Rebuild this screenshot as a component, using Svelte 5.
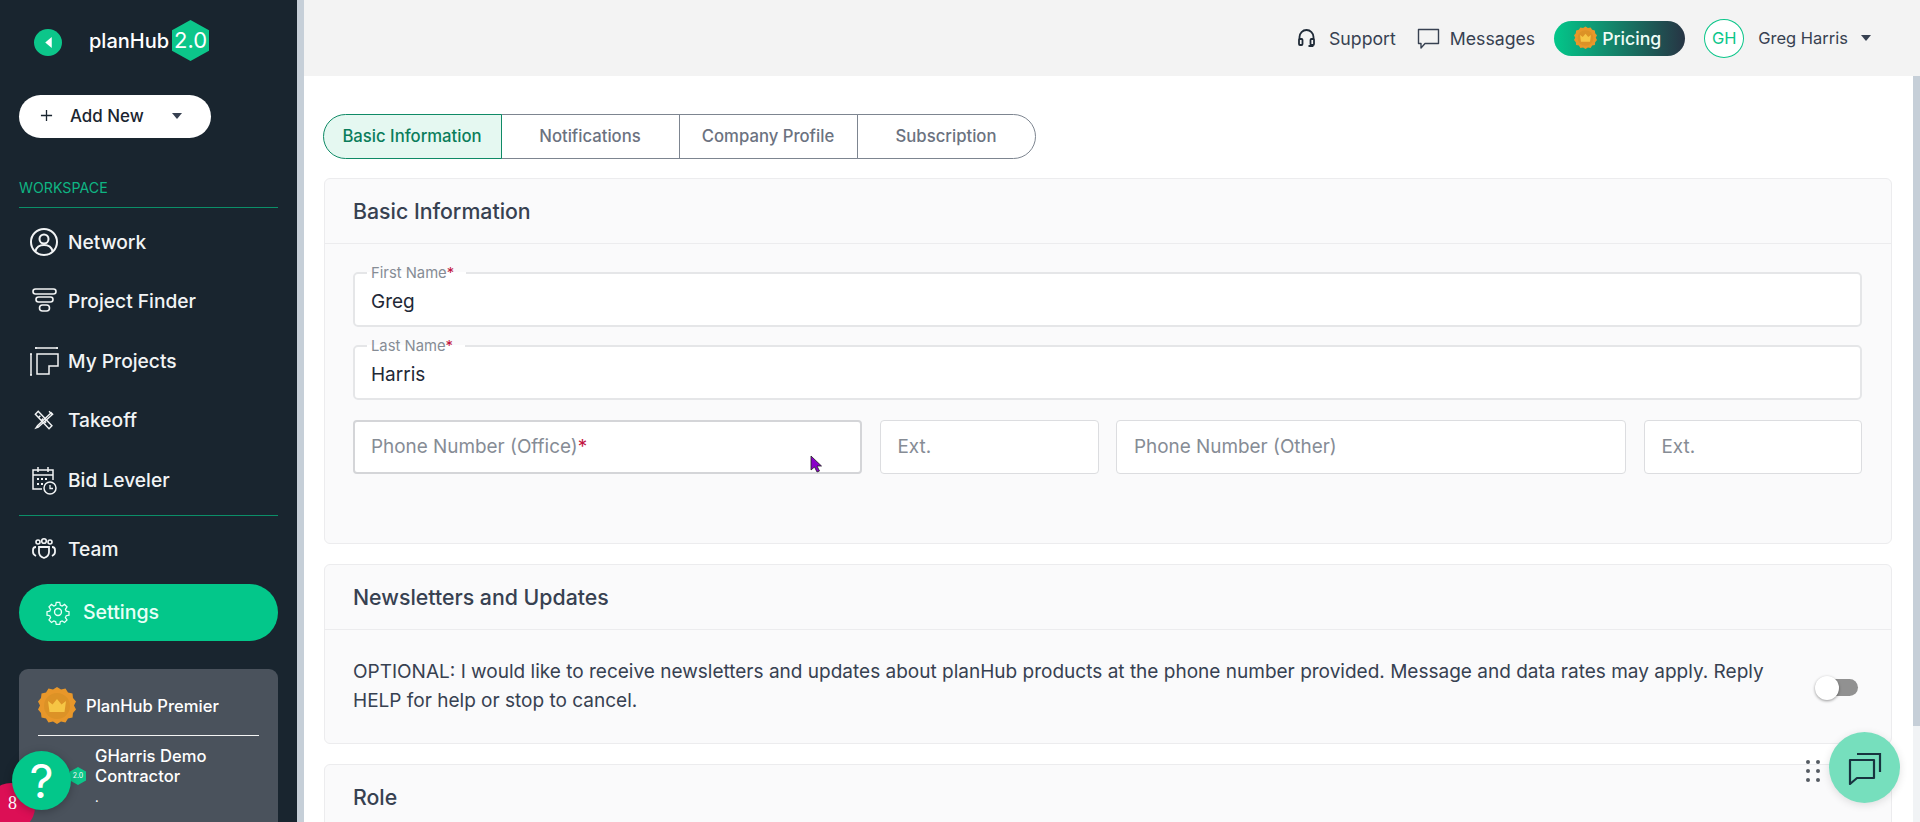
<script>
	const tabs = ['Basic Information', 'Notifications', 'Company Profile', 'Subscription'];
	const navTop = [
		{ label: 'Network', icon: 'network' },
		{ label: 'Project Finder', icon: 'finder' },
		{ label: 'My Projects', icon: 'projects' },
		{ label: 'Takeoff', icon: 'takeoff' },
		{ label: 'Bid Leveler', icon: 'bid' }
	];
</script>

{#snippet hex(cls, text)}
	<span class={cls}>
		<svg viewBox="0 0 37 41" preserveAspectRatio="none"><path d="M18.5 0 37 10.2v20.6L18.5 41 0 30.8V10.2z" fill="#0cc68a" /></svg>
		<b>{text}</b>
	</span>
{/snippet}

{#snippet badge(cls)}
	<svg class={cls} viewBox="0 0 38 38">
		<path fill="#e8972a" d="M19 0l4 2.500 4.500-1 2.500 4 4.500 1 .5 4.500 3 3.500-2 4 2 4-3 3.500-.5 4.500-4.500 1-2.500 4-4.500-1-4 2.500-4-2.500-4.500 1-2.500-4-4.500-1-.5-4.500-3-3.500 2-4-2-4 3-3.500.5-4.500 4.500-1 2.500-4 4.500 1z" />
		<circle cx="19" cy="19" r="13" fill="#dc9226" />
		<path fill="#f6c544" d="M10 14l4.500 3.500L19 12l4.500 5.500L28 14l-1.500 11h-15z" />
	</svg>
{/snippet}

{#snippet navIcon(name)}
	<svg class="nav-icon" viewBox="0 0 30 30" fill="none" stroke="currentColor" stroke-width="1.6">
		{#if name === 'network'}
			<circle cx="15" cy="15" r="13" stroke-width="2" /><circle cx="15" cy="12" r="4.500" stroke-width="2" /><path d="M6.500 24c1-4 4-6 8.500-6s7.500 2 8.500 6" stroke-width="2" />
		{:else if name === 'finder'}
			<rect x="4" y="3" width="23" height="5" rx="2.500" /><rect x="7" y="11" width="17" height="5" rx="2.500" /><rect x="10.500" y="19" width="10" height="6" rx="3" />
		{:else if name === 'projects'}
			<path d="M8 8h21v12h-9v8H8zM6 2h23M7 1v2M28 1v2M2 8v21M1 8h2M1 29h2" stroke-width="1.500" />
		{:else if name === 'takeoff'}
			<g transform="translate(15 15) scale(.72) translate(-15 -15)" stroke-width="2">
				<path d="M7 3 3 7l19 20 4-4zM10 9l-2 2M14 13l-2 2M18 17l-2 2" /><path d="M25 5 6 23l-2 3 3-1L27 7zM22 3l5 5" />
			</g>
		{:else if name === 'bid'}
			<path d="M13 24H4V5h20v10M4 10h20M9 2v5M19 2v5" stroke-width="1.500" /><path d="M8 13h2v2H8zM12 13h2v2h-2zM16 13h2v2h-2zM8 18h2v2H8zM12 18h2v2h-2z" fill="currentColor" stroke="none" /><circle cx="21" cy="23" r="6" stroke-width="1.500" /><path d="M21 20v3.500h3" stroke-width="1.300" />
		{:else if name === 'team'}
			<circle cx="9" cy="8" r="2" /><circle cx="15" cy="7" r="2.300" /><circle cx="21" cy="8" r="2" /><path d="M10 13h10v5c0 3-2 5-5 6-3-1-5-3-5-6z" stroke-width="1.800" /><path d="M7 13c-2 0-3 1-3 3v2c0 2 1 3 3 4M23 13c2 0 3 1 3 3v2c0 2-1 3-3 4" stroke-width="1.800" />
		{:else}
			<circle cx="15" cy="15" r="4" /><path d="M12.800 3h4.400l.7 3.500 2.300 1 3-2 3.100 3.100-2 3 1 2.300 3.500.7v4.400l-3.500.7-1 2.300 2 3-3.100 3.100-3-2-2.300 1-.7 3.500h-4.400l-.7-3.500-2.300-1-3 2-3.100-3.100 2-3-1-2.300-3.500-.7v-4.400l3.500-.7 1-2.300-2-3 3.100-3.100 3 2 2.300-1z" transform="translate(15 15) scale(.92) translate(-15 -15)" />
		{/if}
	</svg>
{/snippet}

{#snippet field(label, value)}
	<fieldset class="field">
		<legend>{label}<i>*</i></legend>
		<span>{value}</span>
	</fieldset>
{/snippet}

<div class="page">
	<aside class="sidebar">
		<div class="logo-row">
			<span class="back"><svg viewBox="0 0 10 12"><path d="M8 1v10L2 6z" fill="#fff" /></svg></span>
			<span class="logo-word">planHub</span>
			{@render hex('hex-big', '2.0')}
		</div>

		<button class="add-new">
			<svg viewBox="0 0 14 14"><path d="M7 1v12M1 7h12" stroke="#1a2530" stroke-width="1.400" /></svg>
			<span>Add New</span>
			<i class="caret"></i>
		</button>

		<div class="section-label">WORKSPACE</div>

		<nav class="nav">
			{#each navTop as item}
				<a class="nav-item" href="#top">{@render navIcon(item.icon)}{item.label}</a>
			{/each}
		</nav>

		<div class="team">
			<a class="nav-item" href="#top">{@render navIcon('team')}Team</a>
			<a class="settings" href="#top">{@render navIcon('settings')}Settings</a>
		</div>

		<div class="plan-card">
			<div class="plan-head">
				{@render badge('plan-badge')}
				<span>PlanHub Premier</span>
			</div>
			<div class="plan-company">
				{@render hex('hex-small', '2.0')}
				<div>
					<div>GHarris Demo<br />Contractor</div>
					<small>.</small>
				</div>
			</div>
		</div>
	</aside>

	<div class="side-scroll"></div>

	<div class="main">
		<header class="topbar">
			<a href="#top" class="top-link">
				<svg viewBox="0 0 17 18" width="17" height="18" fill="none" stroke="#1f2a37" stroke-width="1.800"><path d="M1.500 11V8a7 7 0 0 1 14 0v3" /><rect x="1" y="10" width="3.500" height="6" rx="1" /><rect x="12.500" y="10" width="3.500" height="6" rx="1" /><path d="M14.500 16v1h-4" /></svg>
				Support
			</a>
			<a href="#top" class="top-link msg">
				<svg viewBox="0 0 23 21" width="23" height="21" fill="none" stroke="#374151" stroke-width="1.400"><path d="M1.500 1.500h20v14H8L4 20v-4.500H1.500z" stroke-linejoin="round" /></svg>
				Messages
			</a>
			<a href="#top" class="pricing">{@render badge('pricing-badge')}Pricing</a>
			<span class="avatar">GH</span>
			<span class="user">Greg Harris</span>
			<i class="caret"></i>
		</header>

		<div class="content-wrap">
			<main class="content">
				<div class="tabs">
					{#each tabs as tab, i}
						<button class:active={i === 0}>{tab}</button>
					{/each}
				</div>

				<section class="card basic">
					<h2>Basic Information</h2>
					<div class="card-body">
						{@render field('First Name', 'Greg')}
						{@render field('Last Name', 'Harris')}
						<div class="phone-row">
							<div class="ph office">Phone Number (Office)<i>*</i></div>
							<div class="ph">Ext.</div>
							<div class="ph">Phone Number (Other)</div>
							<div class="ph">Ext.</div>
						</div>
					</div>
				</section>

				<section class="card news">
					<h2>Newsletters and Updates</h2>
					<div class="news-body">
						<p>OPTIONAL: I would like to receive newsletters and updates about planHub products at the phone number provided. Message and data rates may apply. Reply HELP for help or stop to cancel.</p>
						<span class="toggle"><b></b></span>
					</div>
				</section>

				<section class="card role">
					<h2>Role</h2>
				</section>
			</main>
			<div class="main-scroll"></div>
		</div>
	</div>

	<svg class="cursor" viewBox="0 0 12 18"><path d="M1 1v14l3.500-3 2.500 5 2.500-1-2.500-5h4.500z" fill="#8a00c9" stroke="#222" stroke-width=".8" /></svg>

	<div class="help">?</div>
	<div class="alert">8</div>

	<div class="dots">{#each Array(6) as _}<i></i>{/each}</div>
	<div class="chat">
		<svg viewBox="0 0 34 34" width="34" height="34" fill="none" stroke="#17333f" stroke-width="2.200"><path d="M2 9h24v18H9l-7 6z" stroke-linejoin="round" /><path d="M9 3h23v18" /></svg>
	</div>
</div>

<style>
	:global(body) {
		margin: 0;
		font-family: Inter, 'Liberation Sans', sans-serif;
	}

	.page {
		position: relative;
		display: flex;
		width: 1920px;
		height: 822px;
		overflow: hidden;
		background: #fff;
		color: #374151;
	}

	.sidebar {
		flex: 0 0 297px;
		box-sizing: border-box;
		padding: 0 19px;
		background: #19252f;
		color: #fff;
	}

	.side-scroll {
		flex: 0 0 7px;
		background: #c6cfd8;
	}

	.logo-row {
		display: flex;
		align-items: center;
		height: 82px;
		padding-left: 15px;
	}

	.back {
		display: flex;
		align-items: center;
		justify-content: center;
		width: 28px;
		height: 27px;
		margin-top: 3px;
		border-radius: 50%;
		background: #0cc68a;
	}

	.back svg {
		width: 11px;
		height: 13px;
	}

	.logo-word {
		margin-left: 27px;
		font-size: 20px;
		font-weight: 500;
		white-space: nowrap;
	}

	.hex-big,
	.hex-small {
		position: relative;
		display: flex;
		align-items: center;
		justify-content: center;
	}

	.hex-big svg,
	.hex-small svg {
		position: absolute;
		inset: 0;
		width: 100%;
		height: 100%;
	}

	.hex-big b,
	.hex-small b {
		position: relative;
		font-weight: 400;
	}

	.hex-big {
		width: 37px;
		height: 41px;
		margin: -2px 0 0 3px;
		font-size: 22px;
	}

	.hex-small {
		flex: none;
		width: 16px;
		height: 18px;
		margin: 21px 9px 0 0;
		font-size: 7px;
	}

	.add-new {
		display: flex;
		align-items: center;
		width: 192px;
		height: 43px;
		margin-top: 13px;
		padding: 0 0 2px 21px;
		border: 0;
		border-radius: 22px;
		background: #fff;
		color: #1a2530;
		font: 500 16.900px Inter, sans-serif;
	}

	.add-new svg {
		width: 13px;
		height: 13px;
		margin-right: 17px;
	}

	.add-new .caret {
		margin-left: 28px;
	}

	.caret {
		width: 0;
		height: 0;
		border-top: 6px solid #374151;
		border-right: 5.500px solid transparent;
		border-left: 5.500px solid transparent;
	}

	.section-label {
		height: 29px;
		margin-top: 40px;
		border-bottom: 1px solid #0b8f68;
		color: #0fb583;
		font-size: 14.200px;
		line-height: 20px;
	}

	.nav {
		display: flex;
		flex-direction: column;
		gap: 0;
		margin-top: 4px;
		padding-bottom: 5px;
		border-bottom: 1px solid #0b8f68;
	}

	.nav-item {
		display: flex;
		align-items: center;
		height: 59.500px;
		padding-left: 10px;
		color: #f2f4f5;
		font-size: 19.200px;
		font-weight: 500;
		text-decoration: none;
	}

	.nav-icon {
		flex: none;
		width: 30px;
		height: 30px;
		margin-right: 9px;
		color: #f2f4f5;
	}

	.team {
		margin-top: 5px;
	}

	.team .nav-item {
		height: 57px;
	}

	.settings {
		display: flex;
		align-items: center;
		height: 57px;
		margin-top: 6px;
		padding-left: 26px;
		border-radius: 29px;
		background: #03c78a;
		color: #e9fff7;
		font-size: 19.500px;
		font-weight: 500;
		text-decoration: none;
	}

	.settings .nav-icon {
		width: 26px;
		height: 26px;
		margin-right: 12px;
		color: #e9fff7;
	}

	.plan-card {
		height: 200px;
		margin-top: 28px;
		padding: 19px 19px 0;
		border-radius: 9px;
		background: #4a525c;
	}

	.plan-head {
		display: flex;
		align-items: center;
		gap: 10px;
		height: 47px;
		border-bottom: 1px solid #f5f5f5;
		font-size: 16.600px;
		font-weight: 500;
	}

	.plan-head span {
		margin-bottom: 10px;
	}

	.plan-badge {
		width: 38px;
		height: 38px;
		margin-bottom: 10px;
	}

	.plan-company {
		display: flex;
		padding: 10px 0 0 32px;
		font-size: 16.600px;
		font-weight: 500;
		line-height: 20px;
	}

	.plan-company small {
		display: block;
		margin-top: 2px;
		font-size: 12px;
	}

	.main {
		display: flex;
		flex: 1;
		flex-direction: column;
		min-width: 0;
	}

	.topbar {
		display: flex;
		align-items: center;
		justify-content: flex-end;
		height: 76px;
		padding-right: 49px;
		box-sizing: border-box;
		background: #f3f3f3;
	}

	.top-link {
		display: flex;
		align-items: center;
		gap: 14px;
		color: #374151;
		font-size: 17.700px;
		text-decoration: none;
	}

	.msg {
		gap: 10px;
		margin-left: 21px;
	}

	.pricing {
		display: flex;
		align-items: center;
		gap: 5px;
		width: 131px;
		height: 35px;
		margin-left: 19px;
		padding-left: 20px;
		box-sizing: border-box;
		border-radius: 18px;
		background: linear-gradient(90deg, #03c78a, #273444);
		color: #eefdf7;
		font-size: 17.700px;
		font-weight: 500;
		text-decoration: none;
	}

	.pricing-badge {
		flex: none;
		width: 23px;
		height: 24px;
	}

	.avatar {
		display: flex;
		align-items: center;
		justify-content: center;
		width: 40px;
		height: 39px;
		margin: 0 14px 0 19px;
		box-sizing: border-box;
		border: 1px solid #0cc68a;
		border-radius: 50%;
		background: #fff;
		color: #0cc68a;
		font-size: 16.500px;
	}

	.user {
		margin-right: 13px;
		color: #374151;
		font-size: 16.500px;
	}

	.content-wrap {
		display: flex;
		flex: 1;
		min-height: 0;
	}

	.content {
		flex: 1;
		min-width: 0;
		padding: 38px 21px 0 19.500px;
	}

	.main-scroll {
		flex: 0 0 7px;
		height: 746px;
		background: linear-gradient(#c6cfd8 0 650px, #f1f3f5 650px);
	}

	.tabs {
		display: flex;
		width: 712px;
		height: 45px;
		margin-bottom: 19px;
	}

	.tabs button {
		flex: 1;
		margin: 0 0 0 -1px;
		padding: 0 0 2px;
		border: 1px solid #7d8590;
		background: #fff;
		color: #6b7280;
		font: 500 16.700px Inter, sans-serif;
	}

	.tabs button:last-child {
		border-radius: 0 23px 23px 0;
	}

	.tabs button.active {
		position: relative;
		border-color: #0f8a66;
		border-radius: 23px 0 0 23px;
		background: #e5f8f1;
		color: #0a7d5b;
	}

	.card {
		margin-bottom: 20px;
		border: 1px solid #ececee;
		border-radius: 6px;
		background: #fafafb;
	}

	h2 {
		margin: 0;
		padding: 0 28.500px;
		border-bottom: 1px solid #ececee;
		color: #374151;
		font-size: 21.300px;
		font-weight: 500;
		line-height: 64px;
	}

	.basic {
		box-sizing: border-box;
		height: 366px;
	}

	.card-body {
		padding: 22px 29px 0 28.500px;
	}

	.field {
		position: relative;
		height: 61px;
		margin: 0 0 12px;
		padding: 0 16px;
		box-sizing: border-box;
		border: 2px solid #e5e6e8;
		border-radius: 5px;
		background: #fff;
		color: #1f2937;
		font-size: 19px;
	}

	.field + .field {
		margin-bottom: 20px;
	}

	.field legend {
		height: 14px;
		margin-left: -4px;
		padding: 0 12px 0 4px;
		color: #868c95;
		font-size: 14.800px;
		line-height: 14px;
	}

	.field span {
		display: block;
		margin-top: 8px;
		line-height: 27px;
	}

	i {
		font-style: normal;
	}

	.field legend i,
	.ph i {
		color: #c2143f;
	}

	.phone-row {
		display: grid;
		grid-template-columns: 509px 219px 510px 1fr;
		gap: 17.500px;
	}

	.ph {
		height: 54px;
		padding-left: 17px;
		box-sizing: border-box;
		border: 1px solid #dcdde0;
		border-radius: 4px;
		background: #fff;
		color: #868c95;
		font-size: 18.900px;
		line-height: 52px;
	}

	.ph.office {
		padding-left: 16px;
		border: 2px solid #d4d5d8;
		line-height: 50px;
	}

	.news {
		box-sizing: border-box;
		height: 180px;
	}

	.news-body {
		display: flex;
		align-items: center;
		justify-content: space-between;
		height: 113px;
		padding: 0 33px 0 28.500px;
	}

	.news-body p {
		width: 1425px;
		margin: -2px 0 0;
		color: #374151;
		font-size: 19.030px;
		line-height: 29px;
	}

	.toggle {
		position: relative;
		width: 36px;
		height: 17px;
		margin-top: 2px;
		border-radius: 9px;
		background: #919191;
	}

	.toggle b {
		position: absolute;
		top: -3px;
		left: -7px;
		width: 24px;
		height: 24px;
		border-radius: 50%;
		background: #fff;
		box-shadow: 0 1px 3px rgba(0, 0, 0, 0.4);
	}

	.role {
		height: 200px;
	}

	.cursor {
		position: absolute;
		top: 455px;
		left: 810px;
		width: 12px;
		height: 18px;
	}

	.help {
		position: absolute;
		top: 751px;
		left: 12px;
		z-index: 2;
		width: 59px;
		height: 59px;
		border-radius: 50%;
		background: #03c78a;
		box-shadow: 0 2px 8px rgba(0, 0, 0, 0.25);
		color: #fff;
		font-size: 47px;
		font-weight: 400;
		line-height: 59px;
		text-align: center;
	}

	.alert {
		position: absolute;
		top: 783px;
		left: -13px;
		z-index: 1;
		width: 48px;
		height: 48px;
		border-radius: 50%;
		background: #dc0f55;
		color: #fff;
		font-family: 'Liberation Serif', serif;
		font-size: 18px;
		line-height: 41px;
		text-align: center;
		text-indent: 3px;
	}

	.dots {
		position: absolute;
		top: 760px;
		left: 1806px;
		display: grid;
		grid-template-columns: 4px 4px;
		gap: 5px 6px;
	}

	.dots i {
		width: 4px;
		height: 4px;
		border-radius: 50%;
		background: #555b63;
	}

	.chat {
		position: absolute;
		top: 732px;
		left: 1829px;
		display: flex;
		align-items: center;
		justify-content: center;
		width: 71px;
		height: 71px;
		border-radius: 50%;
		background: #76dfbd;
		box-shadow: 0 2px 8px rgba(0, 0, 0, 0.12);
	}
</style>
